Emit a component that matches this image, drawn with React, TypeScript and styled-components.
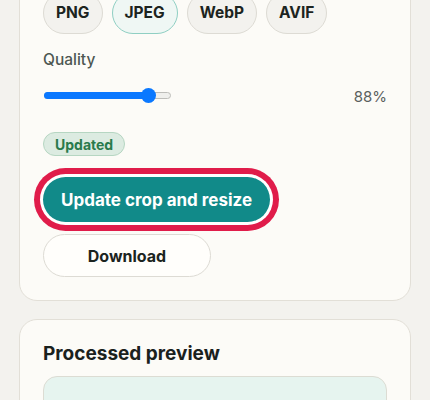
import styled, { createGlobalStyle } from 'styled-components';

const GlobalStyle = createGlobalStyle`
  html, body {
    margin: 0;
    padding: 0;
    background: #f3f2ee;
    font-family: Inter, "Noto Sans", "Liberation Sans", sans-serif;
    -webkit-font-smoothing: antialiased;
  }
`;

const Page = styled.div`
  display: flex;
  flex-direction: column;
  gap: 18px;
  padding: 0 19px 40px;
  margin-top: -31px;
`;

const Card = styled.section`
  background: #fcfbf7;
  border: 1px solid #e2dfd7;
  border-radius: 18px;
  padding: 22px 23px 23px;
  display: flex;
  flex-direction: column;
`;

const FormatRow = styled.div`
  display: flex;
  gap: 9px;
`;

const FormatPill = styled.button<{ $active?: boolean }>`
  height: 42px;
  padding: 0 12px;
  border-radius: 21px;
  border: 1px solid ${({ $active }) => ($active ? '#8fcfc3' : '#dddbd4')};
  background: ${({ $active }) => ($active ? '#eff7f4' : '#f3f2ee')};
  color: #1c2420;
  font-family: inherit;
  font-size: 15.5px;
  font-weight: 700;
  line-height: 1;
`;

const FieldLabel = styled.div`
  margin-top: 16px;
  font-size: 15.5px;
  font-weight: 500;
  color: #4d5752;
`;

const SliderRow = styled.div`
  margin-top: 16px;
  display: flex;
  align-items: center;
  justify-content: space-between;
  height: 20px;
`;

const Track = styled.div`
  position: relative;
  width: 127px;
  height: 7px;
  margin-left: 1px;
  border-radius: 4px;
  background: #efefec;
  border: 1px solid #bdbdb9;
  box-sizing: border-box;
`;

const TrackFill = styled.div`
  position: absolute;
  left: -1px;
  top: -1px;
  height: 7px;
  border-radius: 4px;
  background: #0a78ff;
`;

const Thumb = styled.div`
  position: absolute;
  top: 50%;
  width: 15px;
  height: 15px;
  margin-left: -7.5px;
  margin-top: -7.5px;
  border-radius: 50%;
  background: #0a78ff;
`;

const SliderValue = styled.span`
  font-size: 15px;
  color: #5a605d;
  margin-top: 3px;
`;

const Badge = styled.span`
  align-self: flex-start;
  margin-top: 27px;
  height: 24px;
  box-sizing: border-box;
  padding: 0 11px;
  display: inline-flex;
  align-items: center;
  border-radius: 12px;
  background: #dcebe1;
  border: 1px solid #b6d6c2;
  color: #2a7a4c;
  font-size: 14px;
  font-weight: 700;
`;

const PrimaryButton = styled.button`
  align-self: flex-start;
  margin-top: 21px;
  height: 45px;
  padding: 0 18px;
  border: none;
  border-radius: 23px;
  background: #118a89;
  color: #ffffff;
  font-family: inherit;
  font-size: 17px;
  font-weight: 700;
  box-shadow: 0 0 0 3px #ffffff, 0 0 0 9px #e01c4a;
`;

const SecondaryButton = styled.button`
  align-self: flex-start;
  margin-top: 12px;
  width: 168px;
  height: 43px;
  border: 1px solid #dddbd4;
  border-radius: 22px;
  background: #fffefb;
  color: #1c2420;
  font-family: inherit;
  font-size: 16px;
  font-weight: 700;
`;

const CardTitle = styled.h2`
  margin: 0;
  font-size: 19px;
  font-weight: 700;
  color: #1a211d;
`;

const PreviewBox = styled.div`
  margin-top: 11px;
  height: 120px;
  border-radius: 14px;
  background: #e6f4ef;
  border: 1px solid #dcdcd3;
`;

const formats = ['PNG', 'JPEG', 'WebP', 'AVIF'];

export default function App() {
  const quality = 88;
  const p = 0.87;
  const thumbX = 7.5 + 112 * p;

  return (
    <>
      <GlobalStyle />
      <Page>
        <Card>
          <FormatRow>
            {formats.map((f) => (
              <FormatPill key={f} $active={f === 'JPEG'}>
                {f}
              </FormatPill>
            ))}
          </FormatRow>
          <FieldLabel>Quality</FieldLabel>
          <SliderRow>
            <Track>
              <TrackFill style={{ width: `${thumbX + 1}px` }} />
              <Thumb style={{ left: `${thumbX - 1}px` }} />
            </Track>
            <SliderValue>{quality}%</SliderValue>
          </SliderRow>
          <Badge>Updated</Badge>
          <PrimaryButton>Update crop and resize</PrimaryButton>
          <SecondaryButton>Download</SecondaryButton>
        </Card>
        <Card>
          <CardTitle>Processed preview</CardTitle>
          <PreviewBox />
        </Card>
      </Page>
    </>
  );
}
